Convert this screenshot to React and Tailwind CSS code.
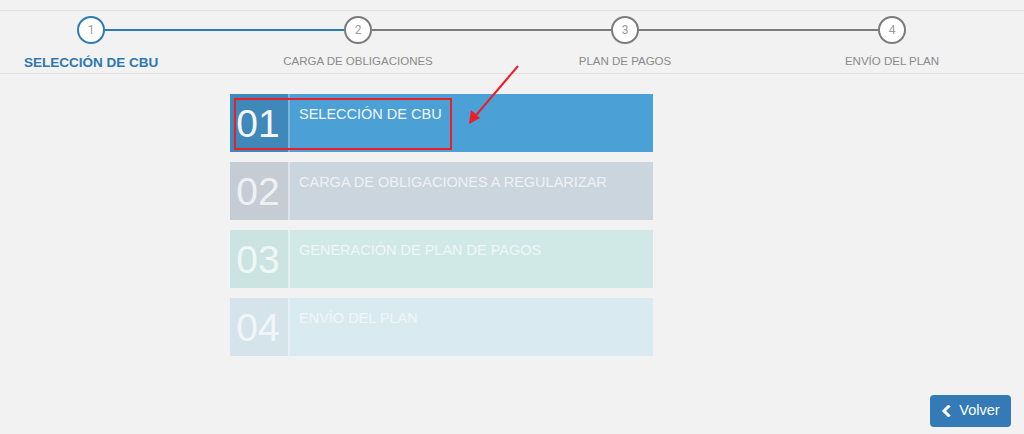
const steps = [
    { n: 1, label: 'SELECCIÓN DE CBU', active: true },
    { n: 2, label: 'CARGA DE OBLIGACIONES' },
    { n: 3, label: 'PLAN DE PAGOS' },
    { n: 4, label: 'ENVÍO DEL PLAN' },
]

const cards = [
    { n: '01', title: 'SELECCIÓN DE CBU', box: 'bg-[#3e89ba]', body: 'bg-[#4ba0d6]', text: 'text-[#f4f6f8]', sep: 'border-[#7db6dc]' },
    { n: '02', title: 'CARGA DE OBLIGACIONES A REGULARIZAR', box: 'bg-[#c6ccd4]', body: 'bg-[#cbd5dd]', text: 'text-[#eef1f3]', sep: 'border-[#dde3e8]' },
    { n: '03', title: 'GENERACIÓN DE PLAN DE PAGOS', box: 'bg-[#cbe4e1]', body: 'bg-[#d1e9e6]', text: 'text-[#eef7f6]', sep: 'border-[#e3f1ef]' },
    { n: '04', title: 'ENVÍO DEL PLAN', box: 'bg-[#d4e4ea]', body: 'bg-[#d9ebf1]', text: 'text-[#f0f6f8]', sep: 'border-[#e6f1f5]' },
]

function App() {
    return (
        <div className="relative h-[434px] w-full bg-[#f2f2f2] flex flex-col font-['Liberation_Sans',Arial,sans-serif] overflow-hidden">

            {/* Stepper */}
            <div className="mt-[10px] border-t border-b border-[#e1e1e1] h-[64px] pt-[5px]">
                <div className="ml-[77px] w-[829px] flex">
                    {steps.map((s, i) => (
                        <div key={s.n} className="contents">
                            <div className="w-[28px] flex flex-col items-center shrink-0">
                                <div className={`w-[28px] h-[28px] rounded-full bg-white border-2 flex items-center justify-center text-[12px] text-[#9a9a9a] font-['Roboto',sans-serif] ${s.active ? 'border-[#2d7bb5]' : 'border-[#7b7b7b]'}`}>
                                    {s.n}
                                </div>
                                <div className={`mt-[9px] whitespace-nowrap ${s.active ? 'text-[13.5px] font-bold text-[#2e78ad]' : 'text-[11.5px] text-[#8a8a8a]'}`}>
                                    {s.label}
                                </div>
                            </div>
                            {i < steps.length - 1 && (
                                <div className={`flex-1 h-[2px] mt-[13px] ${i === 0 ? 'bg-[#2d7bb5]' : 'bg-[#7b7b7b]'}`}></div>
                            )}
                        </div>
                    ))}
                </div>
            </div>

            {/* Cards */}
            <div className="ml-[230px] mt-[20px] w-[423px] flex flex-col gap-[10px]">
                {cards.map((c) => (
                    <div key={c.n} className={`h-[58px] flex ${c.body}`}>
                        <div className={`w-[60px] h-full flex items-center justify-center pr-[2px] border-r-2 ${c.box} ${c.sep}`}>
                            <span className={`text-[39px] leading-none font-light ${c.text}`}>{c.n}</span>
                        </div>
                        <div className={`pl-[9px] pt-[13px] text-[14.5px] leading-none ${c.text}`}>{c.title}</div>
                    </div>
                ))}
            </div>

            {/* Volver */}
            <div className="mt-auto flex justify-end pr-[13px] pb-[7px]">
                <button className="w-[81px] h-[32px] rounded-[4px] bg-[#337ab7] text-white text-[14.5px] flex items-center justify-center gap-[8px]">
                    <svg width="10" height="12" viewBox="0 0 10 12">
                        <polyline points="7.5,1.5 3,6 7.5,10.5" fill="none" stroke="white" strokeWidth="3" strokeLinecap="square" />
                    </svg>
                    <span>Volver</span>
                </button>
            </div>

            {/* Annotation */}
            <div className="absolute left-[234px] top-[98px] w-[218px] h-[52px] border-2 border-[#ee1c25]"></div>
            <svg className="absolute left-0 top-0 pointer-events-none" width="1024" height="434">
                <line x1="518" y1="66" x2="472" y2="120" stroke="#ee1c25" strokeWidth="2" />
                <polygon points="469,124 471,110 480,118" fill="#ee1c25" />
            </svg>
        </div>
    )
}

export default App
